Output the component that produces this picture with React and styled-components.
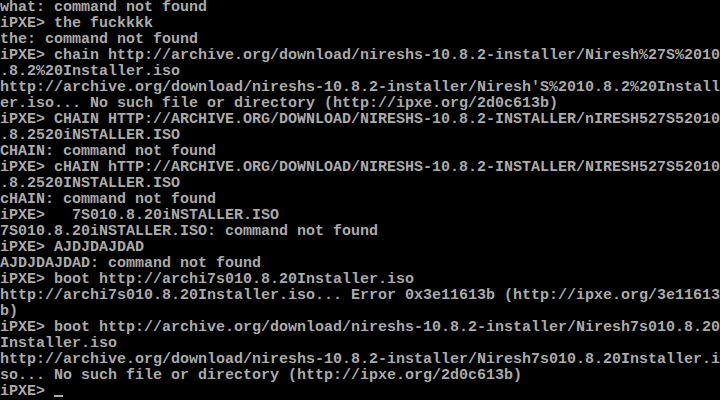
import React from "react";
import styled, { createGlobalStyle } from "styled-components";

const GlobalStyle = createGlobalStyle`
  html, body {
    margin: 0;
    padding: 0;
    background: #000;
  }
`;

const Screen = styled.div`
  width: 720px;
  height: 400px;
  background: #000;
  overflow: hidden;
  display: flex;
  flex-direction: column;
`;

const Line = styled.div`
  height: 16px;
  line-height: 16px;
  font-family: "Liberation Mono", "DejaVu Sans Mono", monospace;
  font-size: 15px;
  font-weight: bold;
  color: #aaaaaa;
  white-space: pre;
`;

const Cursor = styled.span`
  display: inline-block;
  width: 9px;
  height: 2px;
  background: #aaaaaa;
  vertical-align: -2px;
`;

const lines = [
  "what: command not found",
  "iPXE> the fuckkkk",
  "the: command not found",
  "iPXE> chain http://archive.org/download/nireshs-10.8.2-installer/Niresh%27S%2010",
  ".8.2%20Installer.iso",
  "http://archive.org/download/nireshs-10.8.2-installer/Niresh'S%2010.8.2%20Install",
  "er.iso... No such file or directory (http://ipxe.org/2d0c613b)",
  "iPXE> CHAIN HTTP://ARCHIVE.ORG/DOWNLOAD/NIRESHS-10.8.2-INSTALLER/nIRESH527S52010",
  ".8.2520iNSTALLER.ISO",
  "CHAIN: command not found",
  "iPXE> cHAIN hTTP://ARCHIVE.ORG/DOWNLOAD/NIRESHS-10.8.2-INSTALLER/NIRESH527S52010",
  ".8.2520INSTALLER.ISO",
  "cHAIN: command not found",
  "iPXE>   7S010.8.20iNSTALLER.ISO",
  "7S010.8.20iNSTALLER.ISO: command not found",
  "iPXE> AJDJDAJDAD",
  "AJDJDAJDAD: command not found",
  "iPXE> boot http://archi7s010.8.20Installer.iso",
  "http://archi7s010.8.20Installer.iso... Error 0x3e11613b (http://ipxe.org/3e11613",
  "b)",
  "iPXE> boot http://archive.org/download/nireshs-10.8.2-installer/Niresh7s010.8.20",
  "Installer.iso",
  "http://archive.org/download/nireshs-10.8.2-installer/Niresh7s010.8.20Installer.i",
  "so... No such file or directory (http://ipxe.org/2d0c613b)",
];

export default function App() {
  return (
    <>
      <GlobalStyle />
      <Screen>
        {lines.map((text, i) => (
          <Line key={i}>{text}</Line>
        ))}
        <Line>
          {"iPXE> "}
          <Cursor />
        </Line>
      </Screen>
    </>
  );
}
